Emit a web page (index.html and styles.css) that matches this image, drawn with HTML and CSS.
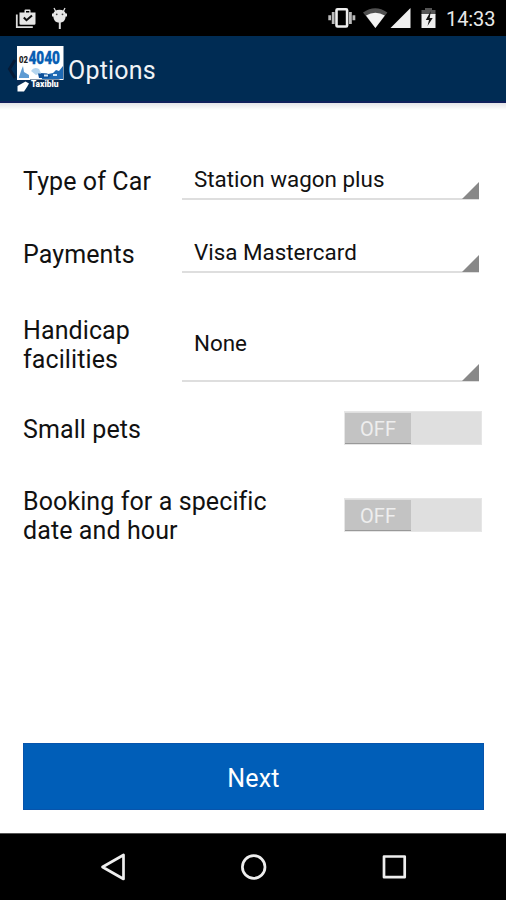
FILE: index.html
```html
<!DOCTYPE html>
<html lang="en">
<head>
<meta charset="utf-8">
<title>Options</title>
<link rel="stylesheet" href="styles.css">
</head>
<body>
<div class="screen">
  <div class="status">
    <svg class="status-icons" width="70" height="36" viewBox="0 0 70 36">
      <path d="M16.8 14.5v12.7h16" fill="none" stroke="#ddd" stroke-width="1.8"/>
      <path d="M19.5 12.5h5v-2q0-1 1-1h4q1 0 1 1v2h5v11q0 1.3-1.3 1.3h-13.4q-1.3 0-1.3-1.3zM26 11v1.5h3.3V11z" fill="#e6e6e6" fill-rule="evenodd"/>
      <path d="M23.8 17.5l2.7 2.7 5.5-4.7" fill="none" stroke="#111" stroke-width="2"/>
      <path d="M54 8l2 4M65 8l-2 4" stroke="#ddd" stroke-width="1.3"/>
      <path d="M52 13.5h1.3q1-3.8 6.2-3.8t6.2 3.8h1.3v3h-1.3q-.5 6.2-6.2 6.2t-6.2-6.2H52z" fill="#e6e6e6"/>
      <path d="M59.8 21.5v7.5" stroke="#ddd" stroke-width="2"/>
      <circle cx="56.7" cy="14.3" r=".9" fill="#444"/><circle cx="62.5" cy="14.3" r=".9" fill="#444"/>
    </svg>
    <div class="status-right">
      <svg width="120" height="36" viewBox="320 0 120 36">
        <path d="M329.7 15.2v5M333.2 12v12M350.4 12v12M353.9 15.2v5" stroke="#bbb" stroke-width="2.8"/>
        <rect x="336.5" y="9.2" width="10.6" height="17.3" rx="1" fill="none" stroke="#eee" stroke-width="2.6"/>
        <path d="M363 12.5q12.2-8.5 24.4 0L375.4 28z" fill="#505050"/>
        <path d="M366 15.5q9.4-5.3 18.8 0L375.4 28z" fill="#f3f3f3"/>
        <path d="M410.5 8v20h-20z" fill="#f0f0f0"/>
        <path d="M425 10v-2h7v2h3.5v5h-14v-5z" fill="#555"/>
        <path d="M421.5 14h14v14h-14z" fill="#eee"/>
        <path d="M430.8 11l-5 9h3.2l-1.5 6 5.2-8h-3z" fill="#111"/>
      </svg>
      <span class="clock">14:33</span>
    </div>
  </div>
  <header class="appbar">
    <svg class="logo" width="60" height="66" viewBox="5 36 60 66">
      <path d="M15 60l-5.5 9 5.5 9" fill="none" stroke="#061b36" stroke-width="3"/>
      <path d="M17 46h46.5v34H17z" fill="#fff"/>
      <path d="M19 77l2-6 2-5 1 6 5 3v3H19z" fill="#5d9bd3"/>
      <path d="M41 73l7 1 5-1 3-3 3 1 4-5v13H42z" fill="#1f6ab4"/>
      <path d="M31 71q3-5 8-2l2 4-5 2z" fill="#b4d5ef"/>
      <path d="M38 73.5h9l4 2-3 2.500h-9z" fill="#0c4f99"/>
      <path d="M44 74.500h4v2h-4zM53 74h4v2h-4z" fill="#d5e8f6"/>
      <path d="M17 80h12v4l-3 1h-9z" fill="#082c54"/>
      <path d="M17.500 86l8-4.500 3.500 2-2 3.500-3 4.500h-6.500z" fill="#fff"/>
      <path d="M30 79.500h29.500V88H29z" fill="#082c54"/>
      <text class="logo-prefix" x="19" y="62.5" textLength="9" lengthAdjust="spacingAndGlyphs">02</text>
      <text class="logo-number" x="28.5" y="64" textLength="31.5" lengthAdjust="spacingAndGlyphs">4040</text>
      <text class="logo-name" x="31" y="87" textLength="27.500" lengthAdjust="spacingAndGlyphs">Taxiblu</text>
    </svg>
    <h1 class="title">Options</h1>
  </header>
  <main class="form">
    <div class="row"><span class="label">Type of Car</span><div class="spinner"><span>Station wagon plus</span></div></div>
    <div class="row"><span class="label">Payments</span><div class="spinner"><span>Visa Mastercard</span></div></div>
    <div class="row tall"><span class="label">Handicap<br>facilities</span><div class="spinner"><span>None</span></div></div>
    <div class="row switch-row"><span class="label">Small pets</span><div class="switch"><span class="thumb">OFF</span></div></div>
    <div class="row switch-row"><span class="label">Booking for a specific<br>date and hour</span><div class="switch"><span class="thumb">OFF</span></div></div>
    <button class="next">Next</button>
  </main>
  <nav class="navbar">
    <svg width="506" height="67" viewBox="0 833 506 67" fill="none" stroke="#eee" stroke-width="2.7" stroke-linejoin="round">
      <path d="M123.5 855v24L102.5 867z"/>
      <circle cx="253.7" cy="867" r="11.3"/>
      <rect x="384" y="856.5" width="20.7" height="20.7"/>
    </svg>
  </nav>
</div>
</body>
</html>
```
FILE: styles.css
```css
* { box-sizing: border-box; }
body { margin: 0; font-family: Roboto, "Liberation Sans", sans-serif; color: #111; background: #fff; }
.screen { width: 506px; height: 900px; display: flex; flex-direction: column; overflow: hidden; }
.status { height: 36px; background: #000; display: flex; justify-content: space-between; }
.status-right { display: flex; width: 186px; }
.clock { color: #e8e8e8; font-size: 20px; line-height: 38px; margin-left: 6px; letter-spacing: -0.1px; }
.appbar { height: 67px; background: #002c54; border-bottom: 2px solid #10205c; display: flex; padding-left: 5px; }
.logo { flex: none; overflow: visible; }
.logo-prefix { font: 900 9px Roboto, sans-serif; fill: #222; }
.logo-number { font: 900 18.5px Roboto, sans-serif; fill: #075eb3; stroke: #075eb3; stroke-width: .4px; }
.logo-name { font: 900 8.5px Roboto, sans-serif; fill: #fff; }
.title { margin: 0 0 0 3px; font-size: 25px; font-weight: 400; line-height: 70px; color: #f0f3f6; letter-spacing: .2px; }
.form { height: 730px; padding: 59px 22px 23px 23px; display: flex; flex-direction: column; background: linear-gradient(#e4e3e7, #fff 7px); }
.row { flex: none; display: flex; justify-content: space-between; align-items: center; height: 38px; margin-bottom: 35px; padding-right: 5px; }
.tall { height: 74px; margin-bottom: 29px; }
.label { font-size: 25px; line-height: 29px; letter-spacing: .1px; white-space: nowrap; }
.spinner { width: 297px; height: 100%; display: flex; align-items: center; padding: 0 0 2px 12px; border-bottom: 2px solid #dedede; position: relative; font-size: 22.4px; letter-spacing: 0; }
.spinner::after { content: ""; position: absolute; right: 0; bottom: -1px; width: 17px; height: 17px; background: #888; clip-path: polygon(100% 0, 100% 100%, 0 100%); }
.switch-row { height: 34px; padding-right: 2px; margin-bottom: 53px; }
.switch-row .label { padding-top: 2px; }
.switch { width: 138px; height: 34px; background: #dfdfdf; border: 1px solid #e6e6e6; padding: 1px 0 0; }
.thumb { display: block; width: 66px; height: 31px; background: #c3c3c3; border-bottom: 1px solid #999; color: #eee; font-size: 20px; line-height: 32px; text-align: center; }
.next { margin: auto 0 0; flex: none; height: 67px; border: 1px solid #0754ac; background: #005eb8; color: #fff; font: 400 25px Roboto, sans-serif; letter-spacing: .2px; padding: 3px 0 0; }
.navbar { height: 67px; background: #000; border-top: 1px solid #555; }
.navbar svg { display: block; margin-top: -1px; }
```
